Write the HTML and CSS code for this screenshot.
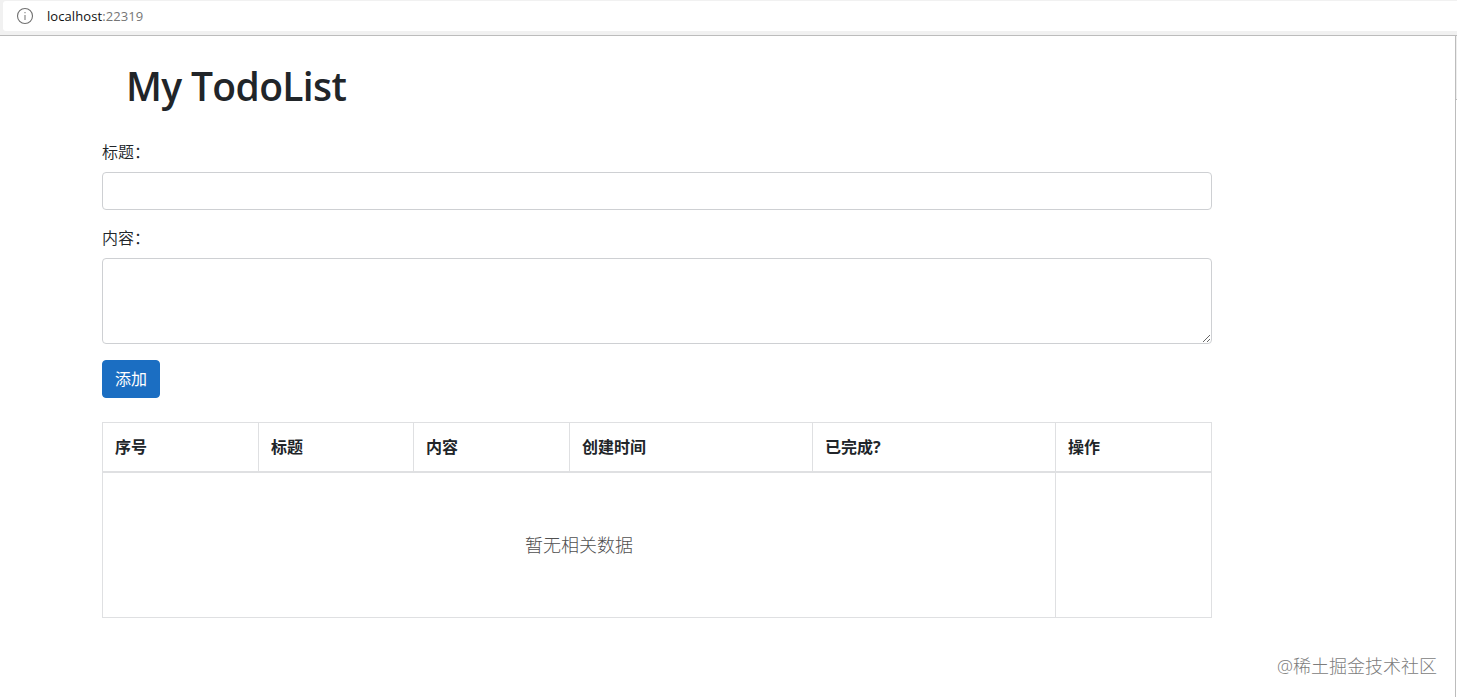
FILE: index.html
```
<!DOCTYPE html>
<html lang="zh-CN">
<head>
    <meta charset="UTF-8">
    <meta name="viewport" content="width=device-width, initial-scale=1.0">
    <title>My TodoList</title>
    <link rel="stylesheet" href="styles.css">
</head>
<body>
    <div class="address-bar">
        <div class="address">
            <svg class="info-icon" width="18" height="18" viewBox="0 0 18 18">
                <circle cx="9" cy="9" r="7.5" fill="none" stroke="#707070" stroke-width="1.1"/>
                <path d="M9 8v5M9 5v1.3" stroke="#8a8a8a" stroke-width="1.2"/>
            </svg>
            <span class="url">localhost<span class="port">:22319</span></span>
        </div>
    </div>

    <div class="view">
        <div class="page">
            <h1 class="title">My TodoList</h1>

            <form class="todo-form">
                <div class="form-group">
                    <label for="title">标题：</label>
                    <input type="text" id="title" class="form-control">
                </div>
                <div class="form-group">
                    <label for="content">内容：</label>
                    <textarea id="content" class="form-control content-box"></textarea>
                </div>
                <button type="button" class="add-button">添加</button>
            </form>

            <table class="todo-table">
                <colgroup>
                    <col class="col-small">
                    <col class="col-title">
                    <col class="col-small">
                    <col class="col-large">
                    <col class="col-large">
                    <col class="col-small">
                </colgroup>
                <thead>
                    <tr>
                        <th>序号</th>
                        <th>标题</th>
                        <th>内容</th>
                        <th>创建时间</th>
                        <th>已完成?</th>
                        <th>操作</th>
                    </tr>
                </thead>
                <tbody>
                    <tr>
                        <td colspan="5" class="empty">暂无相关数据</td>
                        <td></td>
                    </tr>
                </tbody>
            </table>
        </div>
        <div class="side-edge">
            <div class="side-top"></div>
        </div>
        <span class="watermark">@稀土掘金技术社区</span>
    </div>
</body>
</html>
```
FILE: styles.css
```
*{
    box-sizing: border-box;
}
body{
    margin: 0;
    height: 697px;
    overflow: hidden;
    background-color: #fff;
    color: #212529;
    font-family: "Open Sans", "Noto Sans CJK SC", sans-serif;
    font-size: 16px;
    line-height: 24px;
}
.address-bar{
    height: 36px;
    padding: 1px 0 4px 3px;
    background-color: #f1f1f1;
    border-bottom: 1px solid #bcbcbc;
}
.address{
    display: flex;
    align-items: center;
    height: 30px;
    padding-left: 13px;
    background-color: #fff;
    border-radius: 3px 0 0 3px;
}
.url{
    margin-left: 13px;
    color: #111;
    font-size: 13px;
    letter-spacing: 0.08px;
}
.port{
    color: #767676;
}
.view{
    position: relative;
    display: flex;
    justify-content: space-between;
    height: 661px;
}
.page{
    width: 1110px;
    margin-left: 102px;
}
.title{
    margin: 26px 0 30px 24px;
    font-size: 39px;
    font-weight: 600;
    line-height: 48px;
    letter-spacing: -0.65px;
}
.form-group{
    margin-bottom: 16px;
}
label{
    display: block;
    height: 24px;
    margin-bottom: 8px;
    font-weight: 350;
}
.form-control{
    display: block;
    width: 100%;
    height: 38px;
    padding: 6px 12px;
    border: 1px solid #ced0d3;
    border-radius: 4px;
    background-color: #fff;
    font: inherit;
    outline: none;
}
.content-box{
    height: 86px;
    resize: vertical;
}
.add-button{
    display: block;
    width: 58px;
    height: 38px;
    padding: 0;
    border: 1px solid #1b6ec2;
    border-radius: 4px;
    background-color: #1b6ec2;
    color: #fff;
    font: inherit;
}
.todo-table{
    width: 1110px;
    margin-top: 24px;
    border-collapse: collapse;
    table-layout: fixed;
}
.col-small{
    width: 156px;
}
.col-title{
    width: 155px;
}
.col-large{
    width: 243px;
}
th, td{
    border: 1px solid #dfe0e2;
    padding: 12px;
    text-align: left;
}
th{
    height: 49px;
    padding-bottom: 11px;
    border-bottom-width: 2px;
    font-weight: 700;
}
td{
    height: 146px;
}
.empty{
    padding-top: 13px;
    color: #505050;
    font-size: 18px;
    font-weight: 300;
    text-align: center;
}
.side-edge{
    width: 2px;
    border-left: 1px solid #bcbcbc;
}
.side-top{
    height: 64px;
    background-color: #eee;
    border-bottom: 1px solid #bcbcbc;
}
.watermark{
    position: absolute;
    right: 20px;
    bottom: 19px;
    color: #7c7c7c;
    font-size: 18px;
    font-weight: 300;
}
```
